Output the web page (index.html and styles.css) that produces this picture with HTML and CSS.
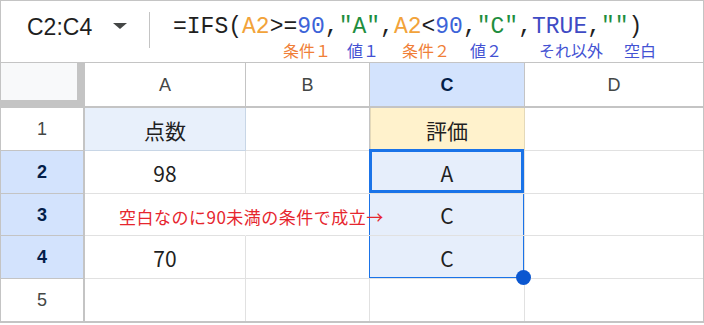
FILE: index.html
```html
<!DOCTYPE html>
<html lang="ja">
<head>
<meta charset="utf-8">
<title>IFS</title>
<link rel="stylesheet" href="styles.css">
</head>
<body>
<div class="frame">
  <div class="fbar">
    <div class="namebox"><span class="rangename">C2:C4</span><span class="caret"></span></div>
    <div class="divider"></div>
    <div class="formula">
      <div class="code">=IFS(<span class="ref">A2</span>&gt;=<span class="num">90</span>,<span class="str">"A"</span>,<span class="ref">A2</span>&lt;<span class="num">90</span>,<span class="str">"C"</span>,<span class="bool">TRUE</span>,<span class="str">""</span>)</div>
      <div class="notes">
        <span class="note cond n1">条件１</span>
        <span class="note val n2">値１</span>
        <span class="note cond n3">条件２</span>
        <span class="note val n4">値２</span>
        <span class="note val n5">それ以外</span>
        <span class="note val n6">空白</span>
      </div>
    </div>
  </div>

  <div class="grid">
    <div class="corner"></div>
    <div class="colhead">A</div>
    <div class="colhead">B</div>
    <div class="colhead sel">C</div>
    <div class="colhead last">D</div>

    <div class="rowhead">1</div>
    <div class="cell head-a">点数</div>
    <div class="cell before-c">&nbsp;</div>
    <div class="cell head-c">評価</div>
    <div class="cell last"></div>

    <div class="rowhead sel">2</div>
    <div class="cell">98</div>
    <div class="cell"></div>
    <div class="cell active">A</div>
    <div class="cell last"></div>

    <div class="rowhead sel">3</div>
    <div class="cell spill"><span class="remark">空白なのに90未満の条件で成立→</span></div>
    <div class="cell"></div>
    <div class="cell inrange">C</div>
    <div class="cell last"></div>

    <div class="rowhead sel">4</div>
    <div class="cell">70</div>
    <div class="cell"></div>
    <div class="cell inrange end">C<span class="handle"></span></div>
    <div class="cell last"></div>

    <div class="rowhead bottom">5</div>
    <div class="cell bottom"></div>
    <div class="cell bottom"></div>
    <div class="cell bottom"></div>
    <div class="cell bottom last"></div>
  </div>
</div>
</body>
</html>
```

FILE: styles.css
```css
body { margin: 0; background: #fff; font-family: "Liberation Sans", Arial, sans-serif; }
.frame { width: 704px; box-sizing: border-box; border: 1px solid #c4c4c4; border-bottom: none; }

/* formula bar */
.fbar { display: flex; align-items: flex-start; height: 61px; border-bottom: 1px solid #c4c4c4; }
.namebox { display: flex; align-items: flex-start; width: 148px; box-sizing: border-box; padding: 14px 0 0 26px; }
.rangename { font-size: 23px; line-height: 25px; color: #1f1f1f; }
.caret { width: 0; height: 0; margin: 8px 0 0 21px; border-left: 7px solid transparent; border-right: 7px solid transparent; border-top: 6px solid #444746; }
.divider { width: 1px; height: 36px; margin-top: 11px; background: #c4c4c4; }
.formula { margin-left: 23px; }
.code { margin-top: 13px; font-family: "Liberation Mono", monospace; font-size: 23px; line-height: 26px; color: #1f1f1f; white-space: nowrap; }
.ref { color: #f2a33a; }
.num { color: #3c63d8; }
.str { color: #1e8e3e; }
.bool { color: #3f4bc4; }
.notes { display: flex; margin-top: 2px; font-family: "Noto Sans CJK JP", sans-serif; font-size: 16px; line-height: 16px; white-space: nowrap; }
.cond { color: #f07f38; }
.val { color: #4352d3; }
.n1 { margin-left: 110px; }
.n2 { margin-left: 16px; }
.n3 { margin-left: 23px; }
.n4 { margin-left: 20px; }
.n5 { margin-left: 37px; }
.n6 { margin-left: 21px; }

/* sheet */
.grid { display: grid; grid-template-columns: 84px 161px 124px 155px 1fr; grid-template-rows: 45px 43px 43px 42px 43px 42px; border-bottom: 2px solid #c4c4c4; }
.grid > div { box-sizing: border-box; }
.corner { background: #f8f9fa; border-right: 8px solid #c4c4c4; border-bottom: 8px solid #c4c4c4; }
.colhead { display: flex; align-items: center; justify-content: center; border-right: 1px solid #c4c4c4; border-bottom: 2px solid #c4c4c4; font-size: 18px; line-height: 18px; color: #444746; }
.rowhead { display: flex; align-items: center; justify-content: center; border-right: 2px solid #c4c4c4; border-bottom: 1px solid #c4c4c4; font-size: 18px; line-height: 18px; color: #444746; }
.colhead.sel, .rowhead.sel { background: #d3e3fd; color: #041e49; font-weight: bold; }
.cell { display: flex; align-items: flex-end; justify-content: center; padding-bottom: 9px; border-right: 1px solid #e1e1e1; border-bottom: 1px solid #e1e1e1; font-family: "Noto Sans CJK JP", sans-serif; font-size: 21px; line-height: 21px; color: #1f1f1f; }
.last { border-right: none !important; }
.bottom { border-bottom: none !important; }

.head-a { background: #e8f0fb; border-right-color: #c8d6e6; border-bottom-color: #c8d6e6; }
.before-c { border-right-color: #c4c4c4; }
.head-c { background: #fff2cc; border-right-color: #e4d9b9; box-shadow: inset 1px 0 #e4d9b9; }

.spill { justify-content: flex-start; padding-left: 34px; border-right-color: transparent; }
.remark { position: relative; z-index: 1; margin-bottom: 1px; font-size: 17px; line-height: 17px; letter-spacing: 0.5px; color: #e6262e; white-space: nowrap; }

.active, .inrange { position: relative; background: #e6eefb; }
.active::after { content: ""; position: absolute; left: -1px; top: -2px; right: 0; bottom: 0; border: 3px solid #1a73e8; }
.inrange::after { content: ""; position: absolute; left: -1px; top: 0; right: 0; bottom: 0; border-left: 1px solid #1a73e8; border-right: 1px solid #1a73e8; }
.inrange.end::after { border-bottom: 1px solid #1a73e8; }
.handle { position: absolute; right: -7px; bottom: -7px; width: 15px; height: 15px; border-radius: 50%; background: #0b57d0; z-index: 2; }
```
